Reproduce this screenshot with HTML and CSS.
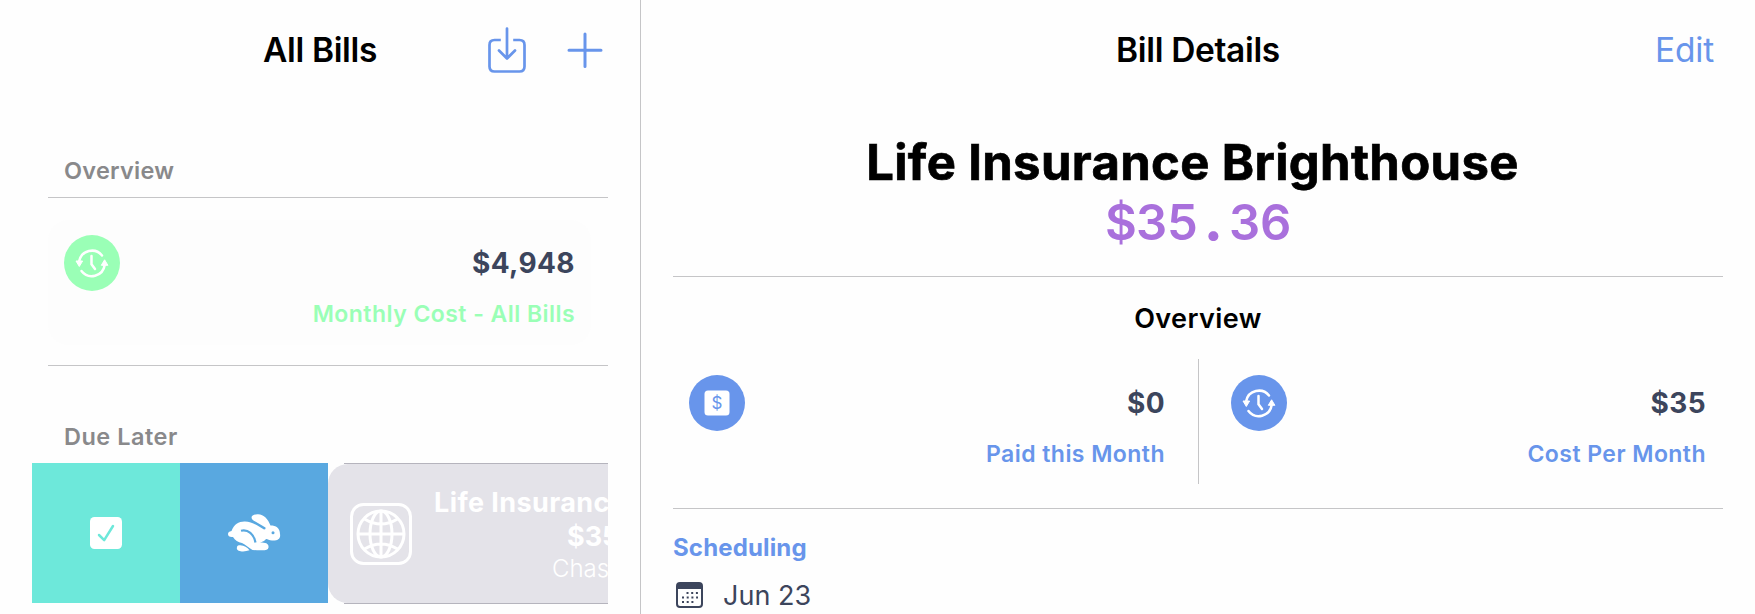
FILE: index.html
```html
<!DOCTYPE html>
<html lang="en">
<head>
<meta charset="utf-8">
<title>Bills</title>
<link rel="stylesheet" href="styles.css">
</head>
<body>
<svg class="defs" width="0" height="0">
  <symbol id="cycle" viewBox="0 0 56 56">
    <g fill="none" stroke="#fff" stroke-width="2.5" stroke-linecap="round" stroke-linejoin="round">
      <path d="M15.200 26A13 13 0 0 1 38 20.500"/>
      <path d="M17.500 36A13 13 0 0 0 40.700 30"/>
      <path d="M27.500 21V29.200L31 34"/>
    </g>
    <path fill="#fff" stroke="#fff" stroke-linejoin="round" d="M12 26H18.600L15.300 31.500ZM37.300 30.300H43.900L40.600 24.800Z"/>
  </symbol>
</svg>
<div class="app">
  <aside class="sidebar">
    <header class="bar side-bar">
      <h1 class="bar-title">All Bills</h1>
      <div class="actions">
        <svg width="38" height="46" viewBox="0 0 38 46" fill="none" stroke="#6895eb" stroke-width="2.700" stroke-linecap="round" stroke-linejoin="round"><path d="M12.800 13H6.500Q1.500 13 1.500 18V39.500Q1.500 44.500 6.500 44.500H31.500Q36.500 44.500 36.500 39.500V18Q36.500 13 31.500 13H25.200" stroke-linecap="butt"/><path d="M19 1.500V31M11 23.500L19 31.500L27 23.500"/></svg>
        <svg width="36" height="36" viewBox="0 0 36 36" stroke="#6895eb" stroke-width="3" stroke-linecap="round"><path d="M18 2V34.500M2 18.200H34"/></svg>
      </div>
    </header>
    <h2 class="section">Overview</h2>
    <div class="summary">
      <div class="stat card">
        <span class="disc green"><svg width="56" height="56"><use href="#cycle"/></svg></span>
        <div class="figures"><strong>$4,948</strong><span class="caption mint">Monthly Cost - All Bills</span></div>
      </div>
    </div>
    <h2 class="section due">Due Later</h2>
    <div class="swipe">
      <div class="action pay">
        <svg width="32" height="32" viewBox="0 0 32 32"><rect width="32" height="32" rx="4.500" fill="#fff"/><path d="M9 18L14.200 23.200L23 9" fill="none" stroke="#6de8da" stroke-width="2.500" stroke-linecap="round" stroke-linejoin="round"/></svg>
      </div>
      <div class="action skip">
        <svg width="54" height="40" viewBox="0 0 54 40"><path fill="#fff" d="M1 21Q1 18.500 4.500 18C7 11 12 8.300 18 8.500C25 8.500 31 13 37 16.500Q39 16.500 38.500 14.500L26.500 7.500C22.500 4.500 25 1 31 1.200C37 1.500 41 6 43.500 12.500C49 12.500 53 15 53 21C54 26 50 28 45 27.500C42 27.500 40 25.500 39 26C38 28 35 29 33 29.500C39 29.500 42 30.500 41.500 34.500C41 37.700 37 37.500 30 37.200L25.500 37C21 34.500 19 31.500 15 30C11 29 8 27.500 6 24Q1 24.500 1 21ZM11 32.500C16 31.500 20 34 22.500 37.300C17 39.300 10 38.700 9.800 35.200Q9.800 33 11 32.500Z"/><path d="M14 17.700C21 16 27 21 28.500 29.500" fill="none" stroke="#59a8e0" stroke-width="2.200"/><circle cx="46" cy="19.800" r="1.500" fill="#59a8e0"/></svg>
      </div>
      <div class="bill">
        <svg class="globe" width="62" height="62" viewBox="0 0 62 62" fill="none" stroke="#fff"><rect x="1.500" y="1.500" width="59" height="59" rx="12" stroke-width="3"/><g stroke-width="3"><circle cx="31" cy="31" r="23"/><ellipse cx="31" cy="31" rx="11" ry="23"/><path d="M31 8V54M8 31H54M14.500 16Q31 26 47.500 16M14.500 46Q31 36 47.500 46"/></g></svg>
        <div class="bill-text"><b class="bill-name">Life Insurance</b><b class="bill-cost">$35.36</b><span class="bill-bank">Chase</span></div>
      </div>
    </div>
  </aside>
  <main class="detail">
    <header class="bar">
      <h1 class="bar-title">Bill Details</h1>
      <a class="edit">Edit</a>
    </header>
    <section class="hero">
      <h2 class="name">Life Insurance Brighthouse</h2>
      <p class="amount"><span>$</span><span>3</span><span>5</span><span class="point">.</span><span>3</span><span>6</span></p>
    </section>
    <section class="overview">
      <h3 class="overview-title">Overview</h3>
      <div class="stats">
        <div class="stat">
          <span class="disc blue"><svg width="26" height="26" viewBox="0 0 26 26"><rect x="0.500" y="0.500" width="25" height="25" rx="3.500" fill="#fff"/><text class="dollar" x="13" y="19" text-anchor="middle">$</text></svg></span>
          <div class="figures"><strong>$0</strong><span class="caption azure">Paid this Month</span></div>
        </div>
        <div class="stat second">
          <span class="disc blue"><svg width="56" height="56"><use href="#cycle"/></svg></span>
          <div class="figures"><strong>$35</strong><span class="caption azure">Cost Per Month</span></div>
        </div>
      </div>
    </section>
    <section class="schedule">
      <h3 class="schedule-title">Scheduling</h3>
      <div class="date">
        <svg width="27" height="26" viewBox="0 0 27 26"><rect x="1" y="1" width="25" height="24" rx="3" fill="none" stroke="#3c455c" stroke-width="2"/><path d="M1 7V4Q1 1 4 1H23Q26 1 26 4V7Z" fill="#3c455c"/><path d="M10.500 11H22M6 15.500H22M6 20H17.500" stroke="#3c455c" stroke-width="2" stroke-dasharray="2 2.700"/></svg>
        <span>Jun 23</span>
      </div>
    </section>
  </main>
</div>
</body>
</html>
```

FILE: styles.css
```css
* { box-sizing: border-box; margin: 0; padding: 0; }
body { width: 1755px; height: 614px; overflow: hidden; background: #fefefe; color: #000; font-family: Inter, "Liberation Sans", sans-serif; }
.defs { display: block; }
svg { display: block; flex: none; overflow: visible; }
.app { display: grid; grid-template-columns: 641px 1fr; height: 614px; }
.sidebar { border-right: 1px solid #c5c5c7; padding-left: 48px; overflow: hidden; }
.bar { display: grid; grid-template-columns: 1fr auto 1fr; align-items: center; height: 100px; }
.bar-title { grid-column: 2; font-size: 33.500px; font-weight: 600; line-height: 40px; letter-spacing: -0.350px; white-space: nowrap; }
.side-bar { margin-left: -48px; }
.actions { display: flex; justify-content: flex-end; align-items: center; gap: 41px; padding-right: 37px; }
.section { width: 560px; height: 98px; padding: 56px 0 0 16px; border-bottom: 1px solid #c5c5c7; color: #89898b; font-size: 23.500px; line-height: 30px; font-weight: 600; letter-spacing: 0.250px; }
.summary { width: 560px; height: 168px; padding-top: 22px; border-bottom: 1px solid #c5c5c7; }
.section.due { height: 97px; border: 0; letter-spacing: 0.500px; }
.stat { display: flex; justify-content: space-between; height: 125px; padding: 16px 16px 0; }
.card { width: 543px; border-radius: 20px; background: #fdfdfd; padding-top: 15px; }
.disc { display: grid; place-items: center; flex: none; width: 56px; height: 56px; border-radius: 50%; }
.green { background: #9affb6; }
.blue { background: #6895eb; }
.figures { display: flex; flex-direction: column; align-items: flex-end; white-space: nowrap; }
.figures strong { margin-top: 10px; color: #3c455c; font-size: 28px; line-height: 36px; font-weight: 700; letter-spacing: 0.400px; }
.caption { margin-top: 18px; font-size: 23px; line-height: 30px; font-weight: 600; letter-spacing: 0.450px; }
.mint { color: #9affb6; }
.azure { color: #6895eb; }
.swipe { display: flex; width: 576px; height: 141px; margin-left: -16px; overflow: hidden; background: linear-gradient(#b5b4bd, #b5b4bd) right top / 264px 1px no-repeat, linear-gradient(#b5b4bd, #b5b4bd) right bottom / 264px 1px no-repeat; }
.action { display: grid; place-items: center; flex: none; width: 148px; height: 140px; }
.pay { background: #6de8da; }
.skip { background: #59a8e0; }
.bill { display: flex; flex: none; width: 576px; height: 139px; margin-top: 1px; padding-left: 22px; border-radius: 20px; background: #e4e3e9; color: #fff; }
.globe { margin-top: 39px; }
.bill-text { display: flex; flex-direction: column; margin-left: 22px; white-space: nowrap; }
.bill-name { margin-top: 22px; font-size: 27px; line-height: 34px; letter-spacing: 0.400px; }
.bill-cost { margin-left: 133px; font-size: 27px; line-height: 34px; }
.bill-bank { margin-left: 118px; font-size: 24px; line-height: 30px; font-weight: 300; }
.detail { padding: 0 32px; }
.detail .bar { margin: 0 -32px; }
.edit { justify-self: end; margin-right: 41px; color: #6895eb; font-size: 33.500px; letter-spacing: -0.200px; }
.hero { height: 177px; padding-top: 33px; border-bottom: 1px solid #c5c5c7; text-align: center; }
.name { margin-right: 11px; font-size: 49px; line-height: 60px; font-weight: 700; letter-spacing: 0.350px; white-space: nowrap; -webkit-text-stroke: 0.700px #000; }
.amount { display: flex; justify-content: center; color: #a970dc; font-size: 49px; line-height: 60px; font-weight: 600; }
.amount span { width: 31px; }
.amount .point { font-weight: 900; }
.overview { height: 232px; padding-top: 24px; border-bottom: 1px solid #c5c5c7; }
.overview-title { text-align: center; font-size: 27px; line-height: 36px; font-weight: 600; letter-spacing: 0.400px; }
.stats { display: grid; grid-template-columns: 526px 1fr; margin-top: 22px; }
.stats .stat:first-child { padding-right: 33px; border-right: 1px solid #c5c5c7; }
.stats .second { padding-left: 32px; padding-right: 17px; }
.dollar { fill: #6895eb; font-size: 17px; }
.schedule { padding-top: 23px; }
.schedule-title { color: #6895eb; font-size: 24px; line-height: 32px; font-weight: 700; letter-spacing: 0.150px; }
.date { display: flex; align-items: center; gap: 20px; height: 36px; margin: 13px 0 0 3px; color: #3c455c; font-size: 27px; }
```
